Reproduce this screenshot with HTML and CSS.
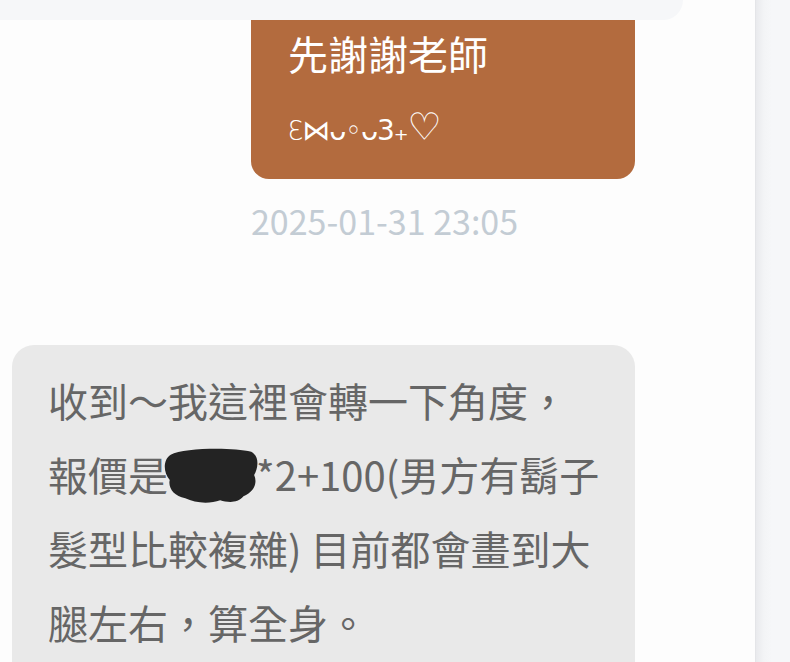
FILE: index.html
```html
<!DOCTYPE html>
<html lang="zh-Hant">
<head>
<meta charset="utf-8">
<title>Chat</title>
<link rel="stylesheet" href="styles.css">
</head>
<body>
<div class="app">
  <main class="chat">
    <div class="prev-card"></div>
    <div class="msg-out">
      <div class="bubble bubble-out">
        <p class="line first">先謝謝老師</p>
        <p class="line kaomoji"><span class="open">Ɛ</span>⋈ᴗ◦ᴗ3<span class="plus">₊</span><span class="heart">♡</span></p>
      </div>
      <div class="time">2025-01-31 23:05</div>
    </div>
    <div class="msg-in">
      <div class="bubble bubble-in">收到～我這裡會轉一下角度，<br>報價是<svg class="redact" viewBox="0 0 100 58" width="97" height="58" aria-hidden="true"><path d="M9 7 C22 0 72 -1 92 4 C101 9 99 21 95 28 C99 37 94 46 84 50 C77 58 67 56 60 54 C49 58 34 57 24 52 C12 50 6 41 8 33 C1 25 1 12 9 7 Z" fill="#232323"/></svg>*2+100(男方有鬍子<br>髮型比較複雜) 目前都會畫到大<br>腿左右，算全身。</div>
    </div>
  </main>
  <aside class="side"></aside>
</div>
</body>
</html>
```

FILE: styles.css
```css
* { box-sizing: border-box; }
html, body { margin: 0; padding: 0; }
body {
  background: #fdfdfd;
  font-family: "Noto Sans CJK TC", "Noto Sans", sans-serif;
  width: 790px;
  height: 662px;
  overflow: hidden;
}
.app {
  display: grid;
  grid-template-columns: 755px 35px;
  height: 662px;
}
.chat {
  padding: 0 120px 0 12px;
  display: flex;
  flex-direction: column;
  overflow: hidden;
}
.prev-card {
  height: 20px;
  flex: none;
  margin: 0 -48px 0 -12px;
  background: #f6f7f9;
  border-bottom-right-radius: 20px;
}
.msg-out {
  align-self: flex-end;
  width: 384px;
  display: flex;
  flex-direction: column;
}
.line { margin: 0; height: 74px; }
.line.first { margin-top: -4px; }
.bubble {
  font-size: 40px;
  line-height: 74px;
}
.bubble-out {
  background: #b36b3e;
  color: #fff;
  padding: 0 36px 15px 37px;
  border-radius: 0 0 18px 18px;
}
.kaomoji {
  font-family: "DejaVu Sans", "Noto Sans", sans-serif;
  font-size: 28px;
  letter-spacing: -1px;
}
.kaomoji .open { font-size: 26px; font-weight: 300; }
.kaomoji .heart { font-size: 38px; }
.kaomoji .plus { font-size: 28px; }
.time {
  margin-top: 20px;
  font-size: 34px;
  line-height: 44px;
  color: #c3ccd4;
}
.msg-in {
  margin-top: 102px;
}
.bubble-in {
  background: #e9e9e9;
  color: #666666;
  padding: 18px 20px 30px 36px;
  border-radius: 22px 22px 0 0;
  white-space: nowrap;
}
.redact {
  display: inline-block;
  vertical-align: -14px;
  margin: 0 -3px 0 -6px;
}
.side {
  background: linear-gradient(to right, #e9eaed 0, #f3f4f6 8px, #f6f7f9 16px);
  border-left: 1px solid #e4e5e8;
}
```
